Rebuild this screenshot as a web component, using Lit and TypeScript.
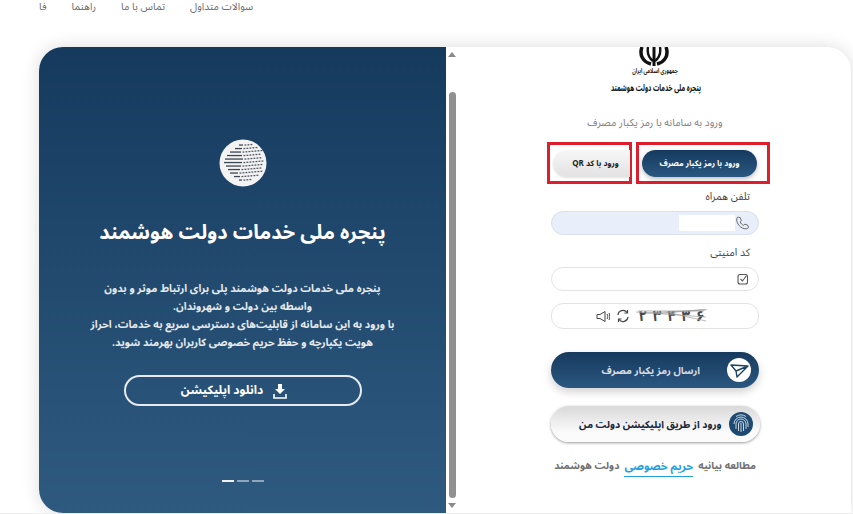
import { LitElement, html, css, svg } from "lit";
import { customElement } from "lit/decorators.js";

function globeMarks() {
  const rows = [
    [-18, -4, 0, 3], [-14.500, -8, -1, 5], [-11, -13, -2, 7], [-7.500, -16, -1, 6], [-4, -18, 0, 6],
    [-0.500, -19, -1, 7], [3, -17, -2, 7], [6.500, -15, -3, 7], [10, -13, -5, 8], [13.500, -9, -3, 6], [17, -4, -1, 3],
  ];
  return rows.map(([y, a, b, n]) => {
    const dots = [];
    for (let i = 0; i < n; i++) {
      dots.push(svg`<rect x=${b + 1.5 + i * 3} y=${y - 0.6 - i * 0.25} width="1.8" height="1.3" fill="#4a5560"></rect>`);
    }
    return svg`<rect x=${a} y=${y - 0.6} width=${b - a} height="1.3" fill="#3c4652"></rect>${dots}`;
  });
}

const CAPTCHA = ["۲", "۳", "۴", "۳", "۶"];

@customElement("app-root")
export class AppRoot extends LitElement {
  static styles = css`
    :host { display: block; font-family: "Noto Sans Arabic", "DejaVu Sans", sans-serif; }
    .page { width: 853px; height: 514px; overflow: hidden; background: #fff; display: flex; flex-direction: column; }
    .nav { height: 47px; flex: none; display: flex; align-items: flex-start; gap: 25px; padding: 1px 0 0 39px; box-sizing: border-box; color: #6d6d6d; font-size: 10.3px; line-height: 13px; }
    .card { flex: 1; min-height: 0; display: flex; border-radius: 24px 24px 0 24px; margin: 0 2px 0 39px; box-shadow: 0 0 18px rgba(0,0,0,.14); background: #fff; }
    .promo { width: 407px; flex: none; box-sizing: border-box; border-radius: 24px 0 0 24px; background: linear-gradient(180deg, #153a5e 0%, #2f5a80 100%); color: #fff; display: flex; flex-direction: column; align-items: center; padding-top: 92px; }
    .globe { display: block; width: 48px; height: 48px; }
    .title { margin: 31px 0 0; font-size: 20px; font-weight: 700; line-height: 30px; color: #fff; }
    .para { margin: 32px 0 0; font-size: 10.5px; font-weight: 700; line-height: 18px; text-align: center; color: #e6eaee; }
    .download { margin-top: 23px; width: 238px; height: 31px; box-sizing: border-box; border: 2px solid #e6ebef; border-radius: 16px; display: flex; align-items: center; justify-content: center; gap: 10px; font-size: 12px; font-weight: 700; color: #fff; direction: rtl; padding-right: 17px; }
    .dots { margin-top: 74px; display: flex; gap: 3px; }
    .dots i { display: block; width: 12px; height: 2px; background: #8ea5ba; }
    .dots i.on { background: #f2f2f2; }
    .scroll { width: 12px; flex: none; display: flex; flex-direction: column; align-items: center; background: #fff; }
    .arrow-up { margin-top: 5px; width: 0; height: 0; border: 4px solid transparent; border-top: 0; border-bottom: 5px solid #8a8a8a; }
    .thumb { margin-top: 35px; width: 7px; height: 406px; border-radius: 4px; background: #909090; }
    .arrow-down { margin-top: 5px; width: 0; height: 0; border: 4px solid transparent; border-bottom: 0; border-top: 5px solid #8a8a8a; }
    .form { flex: 1; min-width: 0; display: flex; flex-direction: column; align-items: center; padding-left: 1px; color: #333; }
    .emblem { display: block; margin-left: -2px; width: 32px; height: 19px; }
    .gov1 { font-size: 4.8px; line-height: 12px; font-weight: 700; color: #222; transform: scale(1, 1.4); }
    .gov2 { margin: 2px 0 0 2px; font-size: 6.3px; font-weight: 700; line-height: 16px; color: #111; transform: scale(1, 1.5); }
    .sub { margin-top: 17px; font-size: 10.3px; line-height: 20px; color: #808080; }
    .tabs { margin: 9px 0 0 7px; display: flex; gap: 4px; direction: ltr; }
    .tabbox { height: 42px; box-sizing: border-box; border: 3px solid #dd1f2d; display: flex; align-items: center; }
    .tabbox.qr { width: 85px; padding-left: 3px; }
    .tabbox.otp { width: 134px; padding-left: 3px; }
    .tab { border-radius: 14px; font-size: 8px; font-weight: 700; display: flex; align-items: center; justify-content: center; direction: rtl; height: 27px; margin-top: 1px; }
    .tab.qr { width: 79px; margin-right: -1px; background: linear-gradient(#f7f7f7, #e2e2e2); color: #222; box-shadow: 0 1px 2px rgba(0,0,0,.12); border-radius: 14px 0 0 14px; padding-left: 8px; box-sizing: border-box; }
    .tab.otp { width: 115px; background: linear-gradient(#153a5e, #2b5780); color: #fff; box-shadow: 0 2px 5px rgba(0,0,0,.25); }
    .label { width: 208px; text-align: right; font-size: 10.5px; line-height: 14px; color: #444; padding-right: 9px; box-sizing: border-box; }
    .label.a { margin-top: 6px; }
    .label.b { margin-top: 11px; }
    .field { width: 208px; height: 24px; box-sizing: border-box; border: 1px solid #e3e3e3; border-radius: 12px; margin-top: 7px; display: flex; align-items: center; justify-content: flex-start; padding-right: 9px; direction: rtl; background: #fff; }
    .field.tel { background: #e8effb; border-color: #d9e0ec; }
    .mask { width: 56px; height: 16px; background: #fff; }
    .field.captcha { margin-top: 12px; height: 26px; justify-content: center; padding: 0 7px 0 0; direction: ltr; }
    .captcha-code { position: relative; width: 72px; height: 15px; margin-left: 6px; box-sizing: border-box; padding: 0 3px; display: flex; justify-content: space-between; font-size: 15px; line-height: 15px; font-weight: 700; color: #4a4a4a; overflow: hidden; }
    .captcha-code svg { position: absolute; inset: 0; }
    .ico { display: block; flex: none; }
    .ico.gap { margin-left: 6px; }
    .send { margin-top: 23px; width: 208px; height: 36px; box-sizing: border-box; border-radius: 18px; background: linear-gradient(180deg, #163a5e, #2b5780); box-shadow: 0 4px 8px rgba(0,0,0,.18); display: flex; align-items: center; direction: rtl; padding-right: 8px; color: #d6dce3; font-size: 10px; font-weight: 700; gap: 27px; }
    .app { margin-top: 18px; width: 209px; height: 36px; box-sizing: border-box; border-radius: 18px; background: linear-gradient(180deg, #d9d9d9, #fbfbfb 75%); box-shadow: 0 1px 3px rgba(0,0,0,.4); display: flex; align-items: center; direction: rtl; padding-right: 7px; color: #15273c; font-size: 10px; font-weight: 700; gap: 7px; }
    .foot { margin-top: 15px; display: flex; gap: 5px; direction: rtl; font-size: 10.2px; font-weight: 700; line-height: 19px; color: #707070; }
    .foot a { color: #23a0dc; border-bottom: 1.5px solid #23a0dc; font-size: 11px; }
    .strip { height: 1px; flex: none; background: #ededed; }
  `;

  render() {
    return html`<div class="page">
      <nav class="nav"><span>فا</span><span>راهنما</span><span>تماس با ما</span><span>سوالات متداول</span></nav>
      <div class="card">
        <section class="promo">
          <svg class="globe" viewBox="-24 -24 48 48">
            <circle r="23.500" fill="#f3f3f3"></circle>
            ${globeMarks()}
          </svg>
          <h1 class="title" dir="rtl">پنجره ملی خدمات دولت هوشمند</h1>
          <p class="para" dir="rtl">پنجره ملی خدمات دولت هوشمند پلی برای ارتباط موثر و بدون<br>واسطه بین دولت و شهروندان.<br>با ورود به این سامانه از قابلیت‌های دسترسی سریع به خدمات، احراز<br>هویت یکپارچه و حفظ حریم خصوصی کاربران بهرمند شوید.</p>
          <div class="download">
            <svg class="ico" width="14" height="16" viewBox="0 0 14 16"><path d="M5 1h4v5h3L7 11 2 6h3z" fill="#fff"></path><path d="M1 11v4h12v-4" fill="none" stroke="#fff" stroke-width="1.600"></path></svg>
            <span>دانلود اپلیکیشن</span>
          </div>
          <div class="dots"><i class="on"></i><i></i><i></i></div>
        </section>
        <div class="scroll"><div class="arrow-up"></div><div class="thumb"></div><div class="arrow-down"></div></div>
        <section class="form">
          <svg class="emblem" viewBox="0 0 32 19" fill="none" stroke="#111">
            <path d="M4 0C1 8 5 15 13 17" stroke-width="3.500"></path>
            <path d="M28 0c3 8-1 15-9 17" stroke-width="3.500"></path>
            <path d="M10 0c-1 6 1 11 5 14" stroke-width="2.400"></path>
            <path d="M22 0c1 6-1 11-5 14" stroke-width="2.400"></path>
            <path d="M16 0v19" stroke-width="3"></path>
          </svg>
          <div class="gov1" dir="rtl">جمهوری اسلامی ایران</div>
          <div class="gov2" dir="rtl">پنجره ملی خدمات دولت هوشمند</div>
          <div class="sub" dir="rtl">ورود به سامانه با رمز یکبار مصرف</div>
          <div class="tabs">
            <div class="tabbox qr"><div class="tab qr">ورود با کد QR</div></div>
            <div class="tabbox otp"><div class="tab otp">ورود با رمز یکبار مصرف</div></div>
          </div>
          <div class="label a" dir="rtl">تلفن همراه</div>
          <div class="field tel">
            <svg class="ico" width="14" height="14" viewBox="0 0 24 24" fill="none" stroke="#666" stroke-width="1.700"><path d="M6 2l3 1 2 5-2 2c1 3 3 5 6 6l2-2 5 2 1 3c0 2-2 3-4 3C10 22 2 13 3 5c0-2 1-3 3-3z"></path></svg>
            <div class="mask"></div>
          </div>
          <div class="label b" dir="rtl">کد امنیتی</div>
          <div class="field">
            <svg class="ico" width="12" height="12" viewBox="0 0 12 12" fill="none" stroke="#555" stroke-width="1.100"><rect x="1" y="1.500" width="9.500" height="9.500" rx="2"></rect><path d="M3.500 6l2 2 4-5.500"></path></svg>
          </div>
          <div class="field captcha">
            <svg class="ico" width="14" height="13" viewBox="0 0 14 12" fill="none" stroke="#444" stroke-width="1"><path d="M1 4h3l5-3v10L4 8H1z"></path><path d="M11 3.500c1 1.500 1 3.500 0 5M13 2.500c1 2 1 5 0 7"></path></svg>
            <svg class="ico gap" width="14" height="14" viewBox="0 0 14 14" fill="none" stroke="#444" stroke-width="1.200"><path d="M2 6a5 5 0 0 1 9-2.500M12 8a5 5 0 0 1-9 2.500"></path><path d="M11.500 1v3h-3M2.500 13v-3h3"></path></svg>
            <div class="captcha-code">${CAPTCHA.map((d) => html`<span>${d}</span>`)}
              <svg width="72" height="15" viewBox="0 0 72 15" fill="none" stroke="#999" stroke-width=".7"><path d="M0 3l70 5M2 2h66M20 5l51-5M30 3l40 9M10 4l60-3"></path></svg>
            </div>
          </div>
          <div class="send">
            <svg class="ico" width="24" height="24" viewBox="0 0 24 24"><circle cx="12" cy="12" r="12" fill="#fff"></circle><path d="M4 7l17 1-11 11-1-6zM9 13l12-5" fill="none" stroke="#1c4166" stroke-width="1.400" stroke-linejoin="round"></path></svg>
            <span>ارسال رمز یکبار مصرف</span>
          </div>
          <div class="app">
            <svg class="ico" width="24" height="24" viewBox="0 0 24 24" fill="none"><circle cx="12" cy="12" r="12" fill="#1e4a72"></circle><g stroke="#dfe6ec" stroke-width=".9"><path d="M5 12a7 7 0 0 1 14 0v3"></path><path d="M7 17v-5a5 5 0 0 1 10 0v5"></path><path d="M9.500 19v-7a2.500 2.500 0 0 1 5 0v7"></path><path d="M12 11v9"></path><path d="M7 4.500a9 9 0 0 1 10 0"></path></g></svg>
            <span>ورود از طریق اپلیکیشن دولت من</span>
          </div>
          <div class="foot"><span>مطالعه بیانیه</span><a>حریم خصوصی</a><span>دولت هوشمند</span></div>
        </section>
      </div>
      <div class="strip"></div>
    </div>`;
  }
}
